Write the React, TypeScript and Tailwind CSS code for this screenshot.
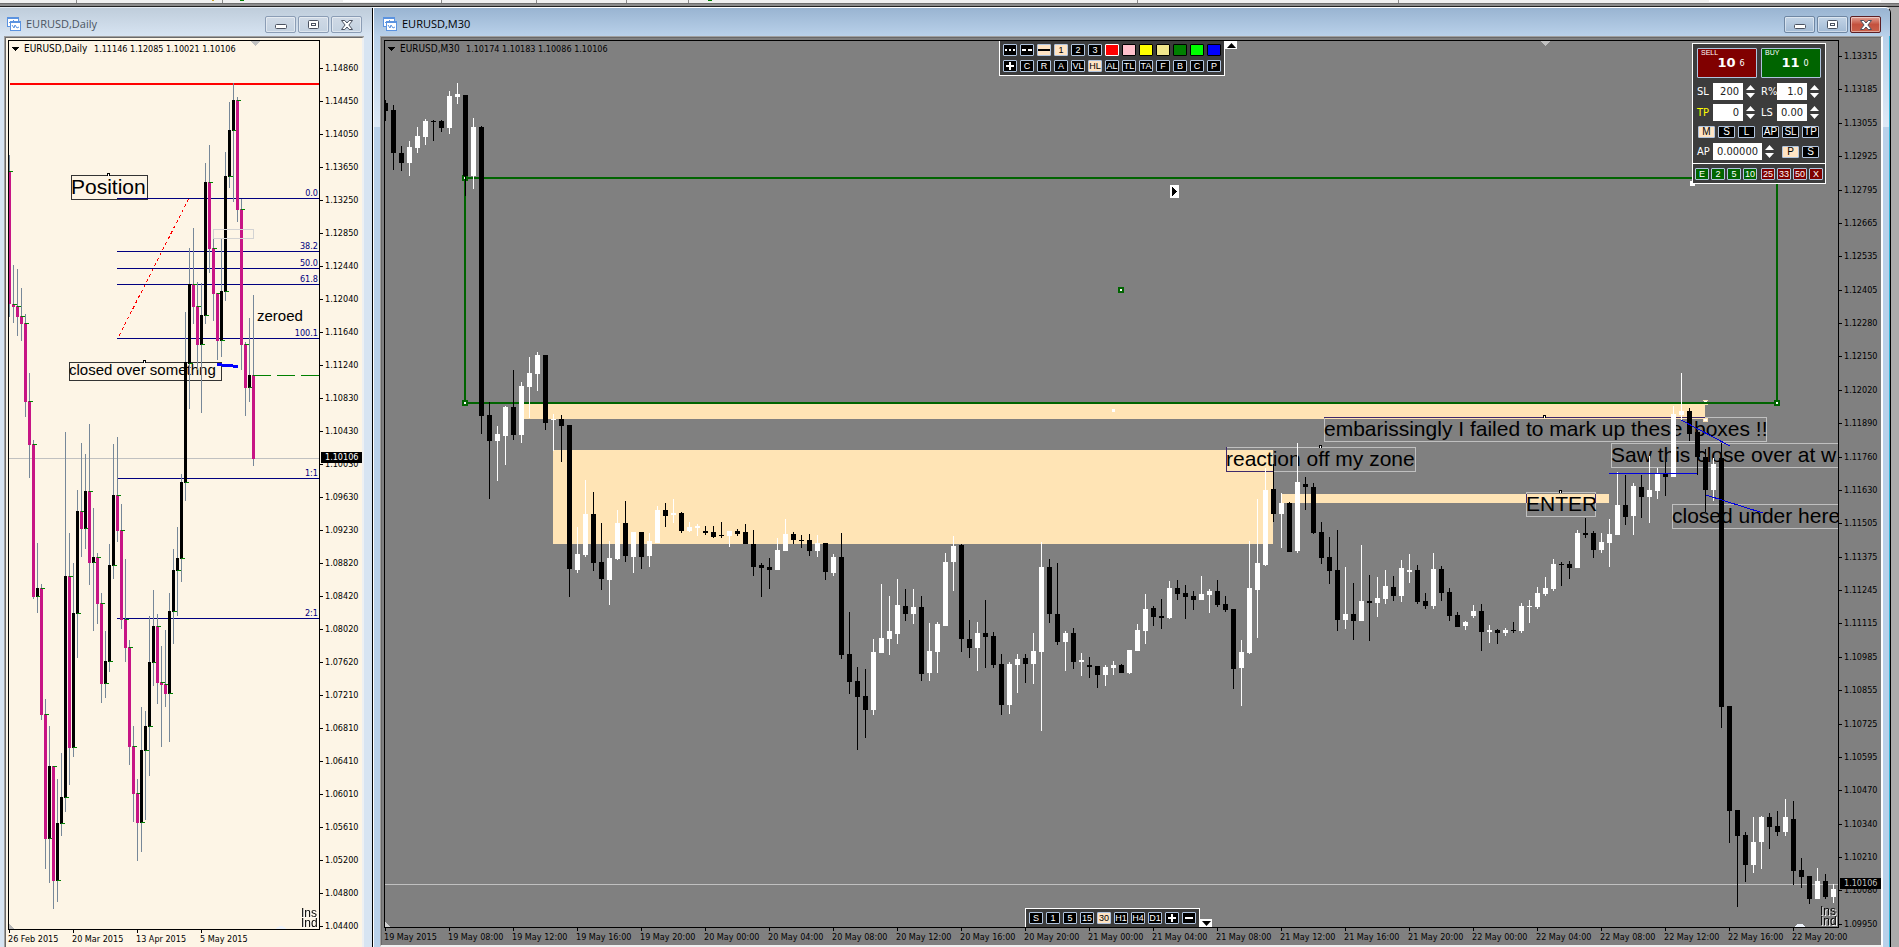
import type { ReactNode } from 'react';

// [high, body top, body bottom, low, rising]
type Candle = [number, number, number, number, 0 | 1];

const DAILY: Candle[] = [
  [155, 171, 304, 317, 0], [265, 304, 307, 323, 0], [269, 306, 317, 336, 0], [288, 316, 324, 341, 0],
  [314, 323, 402, 417, 0], [373, 401, 445, 478, 0], [440, 444, 597, 599, 0], [543, 588, 597, 613, 1],
  [584, 588, 715, 720, 0], [699, 714, 839, 869, 0], [726, 766, 839, 883, 1], [766, 766, 881, 909, 0],
  [779, 823, 881, 902, 1], [753, 797, 824, 836, 1], [432, 576, 798, 812, 1], [533, 576, 748, 785, 0],
  [563, 613, 748, 757, 1], [490, 511, 614, 658, 1], [443, 511, 529, 557, 0], [454, 491, 529, 549, 1],
  [424, 491, 563, 585, 0], [508, 557, 563, 631, 1], [553, 557, 604, 624, 0], [593, 603, 684, 703, 0],
  [631, 661, 684, 698, 1], [544, 565, 662, 672, 1], [444, 495, 566, 579, 1], [437, 495, 531, 542, 0],
  [504, 530, 620, 629, 0], [559, 619, 648, 662, 0], [640, 647, 747, 765, 0], [726, 746, 794, 822, 0],
  [779, 793, 823, 861, 0], [707, 750, 823, 852, 1], [711, 726, 751, 820, 1], [616, 662, 727, 776, 1],
  [590, 626, 663, 686, 1], [614, 626, 683, 704, 0], [646, 682, 685, 747, 0], [630, 684, 694, 707, 0],
  [593, 611, 694, 742, 1], [549, 570, 612, 644, 1], [527, 558, 571, 616, 1], [474, 482, 559, 582, 1],
  [312, 362, 483, 501, 1], [248, 284, 364, 409, 1], [228, 284, 307, 324, 0], [282, 306, 345, 370, 0],
  [283, 315, 345, 413, 1], [163, 182, 316, 324, 1], [145, 182, 249, 273, 0], [239, 248, 294, 321, 0],
  [293, 293, 341, 360, 0], [239, 291, 341, 357, 1], [152, 176, 292, 301, 1], [102, 130, 177, 188, 1],
  [83, 100, 131, 202, 1], [97, 100, 210, 222, 0], [199, 209, 345, 370, 0], [342, 344, 388, 416, 0],
  [318, 375, 388, 402, 1], [295, 375, 459, 466, 0],
];

const M30: Candle[] = [
  [100, 103, 111, 121, 0], [105, 110, 153, 170, 0], [146, 153, 163, 171, 0], [141, 147, 163, 176, 1],
  [127, 136, 148, 153, 1], [119, 121, 137, 145, 1], [120, 121, 122, 141, 0], [120, 121, 128, 132, 0],
  [91, 96, 128, 134, 1], [83, 94, 97, 104, 1], [95, 95, 176, 196, 0], [118, 127, 176, 189, 1],
  [126, 127, 416, 434, 0], [402, 415, 441, 499, 0], [426, 434, 441, 481, 1], [406, 407, 436, 465, 1],
  [370, 407, 435, 440, 0], [382, 386, 435, 443, 1], [357, 373, 387, 418, 1], [352, 355, 374, 391, 1],
  [355, 355, 423, 430, 0], [414, 419, 420, 451, 1], [415, 419, 426, 462, 0], [425, 425, 569, 597, 0],
  [527, 554, 570, 573, 1], [480, 514, 555, 557, 1], [492, 514, 563, 571, 0], [523, 562, 579, 590, 0],
  [541, 558, 580, 605, 1], [510, 523, 559, 560, 1], [501, 523, 556, 562, 0], [532, 532, 557, 573, 1],
  [532, 532, 557, 569, 0], [533, 541, 556, 567, 1], [506, 510, 543, 543, 1], [503, 510, 516, 527, 0],
  [499, 513, 515, 523, 1], [512, 513, 531, 533, 0], [522, 527, 531, 532, 1], [524, 526, 528, 536, 1],
  [526, 531, 533, 535, 0], [526, 532, 537, 538, 0], [522, 535, 536, 538, 0], [531, 531, 536, 547, 1],
  [529, 531, 534, 536, 0], [524, 532, 544, 544, 0], [530, 544, 567, 576, 0], [563, 565, 568, 597, 0],
  [558, 567, 570, 589, 0], [538, 550, 570, 570, 1], [519, 534, 551, 551, 1], [532, 534, 540, 544, 0],
  [535, 540, 541, 548, 0], [534, 540, 551, 556, 0], [535, 543, 551, 557, 1], [543, 543, 572, 580, 0],
  [554, 557, 573, 576, 1], [533, 557, 655, 659, 0], [612, 654, 682, 694, 0], [667, 681, 697, 750, 0],
  [669, 696, 710, 738, 0], [639, 652, 710, 715, 1], [584, 638, 653, 653, 1], [596, 631, 639, 655, 1],
  [579, 605, 634, 644, 1], [589, 606, 614, 621, 0], [589, 607, 614, 624, 1], [596, 607, 674, 681, 0],
  [623, 651, 673, 681, 1], [622, 624, 652, 673, 1], [553, 562, 626, 626, 1], [536, 546, 562, 591, 1],
  [544, 545, 639, 652, 0], [620, 639, 648, 658, 0], [622, 633, 648, 671, 1], [600, 633, 637, 668, 0],
  [632, 636, 665, 668, 0], [654, 664, 705, 715, 0], [662, 664, 705, 714, 1], [654, 659, 665, 693, 1],
  [654, 658, 664, 683, 0], [633, 651, 664, 684, 1], [542, 567, 652, 731, 1], [559, 567, 614, 623, 0],
  [563, 614, 642, 645, 0], [631, 633, 642, 671, 1], [628, 633, 662, 669, 0], [653, 660, 662, 676, 1],
  [657, 665, 667, 678, 0], [666, 666, 675, 688, 0], [665, 667, 675, 686, 1], [661, 665, 668, 675, 1],
  [664, 665, 673, 673, 0], [650, 650, 673, 674, 1], [624, 630, 651, 651, 1], [594, 609, 631, 644, 1],
  [606, 608, 617, 626, 0], [599, 616, 618, 629, 0], [581, 588, 618, 619, 1], [580, 588, 594, 600, 0],
  [585, 593, 597, 619, 0], [591, 596, 600, 610, 0], [576, 594, 600, 600, 1], [589, 591, 595, 613, 1],
  [580, 591, 605, 607, 0], [596, 604, 610, 612, 0], [609, 609, 669, 689, 0], [640, 652, 668, 706, 1],
  [541, 588, 653, 654, 1], [499, 563, 590, 638, 1], [468, 490, 565, 566, 1], [464, 489, 514, 522, 0],
  [493, 503, 514, 548, 1], [502, 503, 552, 552, 0], [443, 482, 551, 553, 1], [477, 484, 487, 510, 0],
  [483, 487, 533, 534, 0], [522, 532, 558, 564, 0], [537, 557, 571, 584, 0], [530, 570, 620, 631, 0],
  [567, 614, 620, 629, 1], [583, 614, 621, 640, 0], [545, 601, 621, 621, 1], [575, 601, 603, 641, 0],
  [577, 598, 603, 617, 1], [570, 586, 599, 604, 1], [576, 587, 596, 601, 0], [560, 568, 596, 602, 1],
  [554, 570, 572, 583, 1], [565, 570, 602, 604, 0], [593, 601, 606, 609, 0], [553, 569, 606, 609, 1],
  [566, 569, 593, 601, 0], [588, 592, 616, 621, 0], [612, 615, 627, 627, 0], [621, 622, 626, 630, 1],
  [605, 611, 616, 618, 1], [604, 611, 632, 651, 0], [625, 630, 632, 643, 1], [629, 630, 633, 644, 0],
  [628, 630, 633, 636, 1], [622, 630, 631, 633, 0], [603, 606, 631, 633, 1], [600, 606, 607, 623, 1],
  [587, 593, 607, 609, 1], [577, 588, 594, 596, 1], [559, 564, 589, 591, 1], [562, 564, 565, 586, 0],
  [561, 564, 568, 579, 0], [530, 533, 568, 568, 1], [518, 533, 535, 538, 0], [531, 533, 550, 558, 0],
  [533, 542, 550, 553, 1], [519, 534, 543, 567, 1], [472, 505, 535, 535, 1], [475, 505, 517, 525, 0],
  [483, 486, 516, 535, 1], [475, 487, 497, 518, 0], [456, 490, 497, 523, 1], [468, 474, 491, 499, 1],
  [462, 474, 477, 496, 0], [406, 414, 477, 477, 1], [373, 411, 415, 420, 1], [408, 411, 434, 441, 0],
  [430, 432, 457, 475, 0], [449, 457, 490, 512, 0], [458, 464, 490, 501, 1], [443, 458, 707, 728, 0],
  [706, 706, 811, 843, 0], [810, 810, 836, 907, 0], [832, 835, 865, 882, 0], [817, 842, 865, 873, 1],
  [816, 817, 842, 869, 1], [813, 817, 827, 849, 0], [811, 826, 832, 836, 0], [799, 817, 832, 836, 1],
  [801, 819, 871, 885, 0], [858, 870, 877, 888, 0], [876, 876, 899, 904, 0], [868, 881, 899, 899, 1],
  [874, 881, 897, 899, 0], [884, 889, 897, 903, 1],
];

const DAILY_PRICES = [
  '1.14860', '1.14450', '1.14050', '1.13650', '1.13250', '1.12850', '1.12440', '1.12040', '1.11640',
  '1.11240', '1.10830', '1.10430', '1.10030', '1.09630', '1.09230', '1.08820', '1.08420', '1.08020',
  '1.07620', '1.07210', '1.06810', '1.06410', '1.06010', '1.05610', '1.05200', '1.04800', '1.04400',
];

const M30_PRICES = [
  '1.13315', '1.13185', '1.13055', '1.12925', '1.12795', '1.12665', '1.12535', '1.12405', '1.12280',
  '1.12150', '1.12020', '1.11890', '1.11760', '1.11630', '1.11505', '1.11375', '1.11245', '1.11115',
  '1.10985', '1.10855', '1.10725', '1.10595', '1.10470', '1.10340', '1.10210', '1.10080', '1.09950',
];

const DAILY_DATES = ['26 Feb 2015', '20 Mar 2015', '13 Apr 2015', '5 May 2015'];

const M30_DATES = [
  '19 May 2015', '19 May 08:00', '19 May 12:00', '19 May 16:00', '19 May 20:00',
  '20 May 00:00', '20 May 04:00', '20 May 08:00', '20 May 12:00', '20 May 16:00', '20 May 20:00',
  '21 May 00:00', '21 May 04:00', '21 May 08:00', '21 May 12:00', '21 May 16:00', '21 May 20:00',
  '22 May 00:00', '22 May 04:00', '22 May 08:00', '22 May 12:00', '22 May 16:00', '22 May 20:00',
];

const FIB_LEVELS: [number, string][] = [
  [198, '0.0'], [251, '38.2'], [268, '50.0'], [284, '61.8'], [338, '100.1'], [478, '1:1'], [618, '2:1'],
];

const TAHOMA = "font-['DejaVu_Sans_Condensed','DejaVu_Sans',sans-serif]";
const ARIAL = "font-['Liberation_Sans',Arial,sans-serif]";

function WindowIcon() {
  return (
    <svg width="14" height="14" viewBox="0 0 14 14" shapeRendering="crispEdges" aria-hidden="true">
      <rect x="0.5" y="0.5" width="11" height="9" fill="#fff" stroke="#5b93e0" />
      <rect x="0" y="0" width="12" height="2" fill="#5b93e0" />
      <path d="M2 6l2-2 1 2 2-3" fill="none" stroke="#5b93e0" />
      <rect x="3.5" y="4.5" width="10" height="9" fill="#fff" stroke="#5b93e0" />
      <rect x="3" y="4" width="11" height="2" fill="#5b93e0" />
      <path d="M5 8l2 3 1-3 2 3 2-1" fill="none" stroke="#5b93e0" shapeRendering="auto" />
    </svg>
  );
}

function TitleBar({ title, active }: { title: string; active: boolean }) {
  const button = active
    ? 'border-[#6f87a3] from-[#c3d4e6] to-[#a3bbd5]'
    : 'border-[#8b9db5] from-[#d0dae6] to-[#c3d1e0]';
  const close = active ? 'border-[#5c1f24] from-[#e0a196] via-[#c4513e] to-[#c9604a]' : button;
  const base = 'flex h-[17px] w-[31px] items-center justify-center rounded-xs border bg-linear-to-b shadow-[inset_0_0_0_1px_rgba(255,255,255,0.45)]';
  return (
    <header
      className={`flex h-7 shrink-0 items-center ${
        active
          ? 'bg-linear-to-b from-[#99b4d1] to-[#b9d1ea] pr-[9px] pl-[9px]'
          : 'bg-linear-to-b from-[#bfcddb] to-[#d7e4f2] pr-[10px] pl-[7px]'
      }`}
    >
      <div className="mt-1 flex flex-1 items-center gap-[5px]">
        <WindowIcon />
        <h2 className={`font-['Open_Sans',sans-serif] text-[11px] leading-4 ${active ? 'text-black' : 'text-[#4a5561]'}`}>
          {title}
        </h2>
      </div>
      <div className="mt-[5px] flex gap-[2px]">
        <button type="button" aria-label="Minimize" className={`${base} ${button}`}>
          <svg width="12" height="5" viewBox="0 0 12 5" className="mt-1">
            <rect x="0.5" y="0.5" width="11" height="4" rx="1" fill="#fff" stroke="#4b5260" />
          </svg>
        </button>
        <button type="button" aria-label="Restore" className={`${base} ${button}`}>
          <svg width="11" height="9" viewBox="0 0 11 9">
            <rect x="0.5" y="0.5" width="10" height="8" rx="1" fill="#fff" stroke="#4b5260" />
            <rect x="3.5" y="3.5" width="4" height="2" fill="#fff" stroke="#4b5260" />
          </svg>
        </button>
        <button type="button" aria-label="Close" className={`${base} ${close}`}>
          <svg width="12" height="10" viewBox="0 0 12 10">
            <path
              d="M0.5 0.5h3.3L6 3l2.2-2.5h3.3L7.9 5l3.6 4.5H8.2L6 7 3.8 9.5H0.5L4.1 5z"
              fill="#fff"
              stroke="#4b5260"
            />
          </svg>
        </button>
      </div>
    </header>
  );
}

function PriceAxis({ prices, className }: { prices: string[]; className: string }) {
  return (
    <ul className={`flex w-[42px] shrink-0 flex-col justify-between ${className}`}>
      {prices.map((price) => (
        <li key={price} className="flex h-[11px] items-center gap-[2px] leading-[11px]">
          <span className="h-px w-[3px] bg-black" />
          {price}
        </li>
      ))}
    </ul>
  );
}

function DateAxis({ dates }: { dates: string[] }) {
  return (
    <ul className="flex h-[17px] w-0 shrink-0">
      {dates.map((date) => (
        <li key={date} className="w-16 shrink-0 leading-3 whitespace-nowrap">
          <span className="ml-px block h-[3px] w-px bg-black" />
          {date}
        </li>
      ))}
    </ul>
  );
}

function Handle({ x, y, color = '#000' }: { x: number; y: number; color?: string }) {
  return (
    <>
      <rect x={x - 3} y={y - 3} width="6" height="6" fill={color} />
      <rect x={x - 1} y={y - 1} width="2" height="2" fill="#fff" />
    </>
  );
}

function Pin({ x, y }: { x: number; y: number }) {
  return (
    <>
      <rect x={x} y={y} width="3" height="3" fill="#000" />
      <rect x={x + 1} y={y + 1} width="1" height="2" fill="#fff" />
    </>
  );
}

type NoteProps = { x: number; y: number; width: number; height?: number; stroke: string; size?: string; children: string };

function Note({ x, y, width, height = 24, stroke, size = 'text-[21px]', children }: NoteProps) {
  return (
    <>
      <rect x={x + 0.5} y={y + 0.5} width={width} height={height} fill="none" stroke={stroke} />
      <text x={x} y={y + height - 5} className={`${ARIAL} ${size}`}>
        {children}
      </text>
    </>
  );
}

function CornerLabel({ x, y }: { x: number; y: number }) {
  return (
    <g className={`${ARIAL} text-[12px] drop-shadow-[1px_1px_0_#fff]`}>
      <text x={x} y={y}>Ins</text>
      <text x={x} y={y + 10}>Ind</text>
    </g>
  );
}

function DailyChart() {
  return (
    <svg className="absolute inset-0 h-full w-full" shapeRendering="crispEdges" role="img" aria-label="EURUSD daily chart">
      <g transform="translate(-9 -41)">
        <path d="M12 47h7l-3.500 4z" />
        <text x="24" y="52" className="text-[10px]">EURUSD,Daily</text>
        <text x="94" y="52">1.11146 1.12085 1.10021 1.10106</text>
        <path d="M251 41h9l-4.500 5z" fill="#c0c0c0" />
        <path d="M9 924v5h5z" fill="#b8b8b8" />
        <path d="M275 929q6-6 12 0z" fill="#eef3fb" />
        <rect x="9" y="458" width="310" height="1" fill="#c0c0c0" />
        <rect x="10" y="83" width="309" height="2" fill="#f00" />
        <Note x={71} y={175} width={76} stroke="#333">Position</Note>
        <Pin x={107} y={173} />
        <Note x={69} y={362} width={152} height={18} stroke="#333" size="text-[15px]">closed over somethng</Note>
        <Pin x={143} y={360} />
        <text x="257" y="321" className={`${ARIAL} text-[15px]`}>zeroed</text>
        {FIB_LEVELS.map(([y, label]) => (
          <g key={label} fill="#000080">
            <rect x="117" y={y} width="202" height="1" />
            <text x="318" y={y - 2} textAnchor="end">{label}</text>
          </g>
        ))}
        <path d="M188.500 199L118 338" stroke="#f00" strokeDasharray="3 3" />
        {DAILY.map(([high, top, bottom, low, rising], i) => {
          const x = 9 + i * 4;
          return (
            <g key={i}>
              <rect x={x} y={high} width="1" height={low - high} fill="#778899" />
              <rect x={x - 1} y={top} width="3" height={bottom - top} fill={rising ? '#000' : '#c71585'} />
              <rect x={x} y={rising ? bottom - 1 : top} width="4" height="1" fill="#008000" />
            </g>
          );
        })}
        <rect x="213.500" y="229.500" width="40" height="9" fill="none" stroke="#d3d3d3" />
        <path d="M217 364.500L238 366.500" stroke="#00f" strokeWidth="3" />
        <path d="M253 375.500H319" stroke="#008000" strokeDasharray="18 6" />
        <CornerLabel x={301} y={917} />
      </g>
    </svg>
  );
}

function M30Chart() {
  return (
    <svg className="absolute inset-0 h-full w-full" shapeRendering="crispEdges" role="img" aria-label="EURUSD 30 minute chart">
      <g transform="translate(-385 -41)">
        <path d="M388 47h7l-3.500 4z" />
        <text x="400" y="52" className="text-[10px]">EURUSD,M30</text>
        <text x="466" y="52">1.10174 1.10183 1.10086 1.10106</text>
        <path d="M1541 41h9l-4.500 5z" fill="#c0c0c0" />
        <path d="M385 922v5h5z" fill="#d0d0d0" />
        <path d="M1794 927q6-7 12 0z" fill="#eef3fb" />
        <rect x="385" y="884" width="1453" height="1" fill="#c0c0c0" />
        <g fill="#ffe4b5">
          <rect x="524" y="404" width="1181" height="15" />
          <rect x="553" y="450" width="720" height="94" />
          <rect x="1282" y="494" width="327" height="9" />
        </g>
        <rect x="465" y="178" width="1312" height="225" fill="none" stroke="#006400" strokeWidth="2" />
        <Handle x={465} y={178} color="#006400" />
        <Handle x={465} y={403} color="#006400" />
        <Handle x={1777} y={403} color="#006400" />
        <Handle x={1121} y={290} color="#006400" />
        <path d="M1703 400h5v1h-5zM1703 404h5v1h-5zM1703 418h5v4h-5z" fill="#ffe4b5" />
        <path d="M1704 401h3v1h-3zM1704 419h3v2h-3z" fill="#fff" />
        <rect x="1112" y="409" width="3" height="3" fill="#fff" />
        <Note x={1226} y={447} width={189} stroke="#c0c0c0">reaction off my zone</Note>
        <path d="M1226.500 447V471.500H1273" fill="none" stroke="#3f2a6b" />
        <Pin x={1319} y={445} />
        <Note x={1324} y={417} width={442} stroke="#c0c0c0">{'embarissingly I failed to mark up these \u00a0boxes !!'}</Note>
        <path d="M1324 417.500H1705" stroke="#3f2a6b" />
        <Pin x={1543} y={415} />
        <Note x={1611} y={443} width={260} stroke="#c0c0c0">Saw this close over at w</Note>
        <Note x={1672} y={504} width={200} stroke="#c0c0c0">closed under here</Note>
        <Note x={1526} y={492} width={69} stroke="#c0c0c0">ENTER</Note>
        <path d="M1526.500 494v9M1595.500 494v9" stroke="#3f2a6b" />
        <Pin x={1559} y={490} />
        {M30.map(([high, top, bottom, low, rising], i) => {
          const x = 385 + i * 8;
          return (
            <g key={i} fill={rising ? '#fff' : '#000'}>
              <rect x={x} y={high} width="1" height={low - high} />
              <rect x={x - 2} y={top} width="5" height={bottom - top} />
            </g>
          );
        })}
        <path d="M1609 473.500H1697M1681 420L1730 446M1706 495L1763 513" stroke="#0000e0" />
        <rect x="1170" y="185" width="9" height="13" fill="#fff" />
        <path d="M1172 187v9l5-4.500z" />
        <rect x="1690" y="181" width="5" height="5" fill="#fff" />
        <CornerLabel x={1820} y={915} />
      </g>
    </svg>
  );
}

function ToolButton({ label, tone = 'bg-black text-white', children }: { label: string; tone?: string; children?: ReactNode }) {
  return (
    <button
      type="button"
      aria-label={label}
      className={`flex h-3 w-[14px] items-center justify-center rounded-[1px] border border-[#b0c4de] ${ARIAL} text-[9px] leading-none ${tone}`}
    >
      {children}
    </button>
  );
}

const BISQUE = 'bg-[#ffe4c4] text-black';

const PALETTE = [
  { name: 'Red', tone: 'bg-[#ff0000] border-white' },
  { name: 'Pink', tone: 'bg-[#ffc0cb] border-black' },
  { name: 'Yellow', tone: 'bg-[#ffff00] border-black' },
  { name: 'Khaki', tone: 'bg-[#f0e68c] border-black' },
  { name: 'Green', tone: 'bg-[#008000] border-black' },
  { name: 'Lime', tone: 'bg-[#00ff00] border-black' },
  { name: 'Blue', tone: 'bg-[#0000ff] border-black' },
];

function Glyph({ d }: { d: string }) {
  return (
    <svg width="12" height="10" viewBox="0 0 12 10" shapeRendering="crispEdges" aria-hidden="true" className="shrink-0">
      <path d={d} fill="currentColor" />
    </svg>
  );
}

const PLUS = 'M5 1h2v3h3v2H7v3H5V6H2V4h3z';

function DrawingToolbar() {
  return (
    <div className="absolute top-0 left-[614px] flex items-start">
      <div className="grid grid-cols-13 gap-x-[3px] gap-y-1 border border-t-0 border-white bg-[#3c3c3c] p-[3px]">
        <ToolButton label="Dotted"><Glyph d="M1 4h2v2H1zM5 4h2v2H5zM9 4h2v2H9z" /></ToolButton>
        <ToolButton label="Dashed"><Glyph d="M1 4h4v2H1zM7 4h4v2H7z" /></ToolButton>
        <ToolButton label="Solid" tone={BISQUE}><Glyph d="M0 4h12v2H0z" /></ToolButton>
        <ToolButton label="Width 1" tone={BISQUE}>1</ToolButton>
        <ToolButton label="Width 2">2</ToolButton>
        <ToolButton label="Width 3">3</ToolButton>
        {PALETTE.map((color) => (
          <button key={color.name} type="button" aria-label={color.name} className={`h-3 w-[14px] rounded-[1px] border ${color.tone}`} />
        ))}
        <ToolButton label="Crosshair"><Glyph d={PLUS} /></ToolButton>
        {['C', 'R', 'A', 'VL', 'HL', 'AL', 'TL', 'TA', 'F', 'B', 'C', 'P'].map((tool, i) => (
          <ToolButton key={i} label={tool} tone={tool === 'HL' ? BISQUE : undefined}>{tool}</ToolButton>
        ))}
      </div>
      <button type="button" aria-label="Collapse drawing tools" className="flex h-2 w-3 items-center justify-center bg-white">
        <svg width="9" height="5" viewBox="0 0 9 5"><path d="M4.500 0L9 5H0z" /></svg>
      </button>
    </div>
  );
}

function TimeframeBar() {
  return (
    <div className="absolute bottom-0 left-[640px] flex items-end">
      <div className="flex gap-[3px] border border-b-0 border-white bg-[#3c3c3c] p-[3px]">
        {['S', '1', '5', '15', '30', 'H1', 'H4', 'D1'].map((frame) => (
          <ToolButton key={frame} label={frame} tone={frame === '30' ? BISQUE : undefined}>{frame}</ToolButton>
        ))}
        <ToolButton label="Zoom in"><Glyph d={PLUS} /></ToolButton>
        <ToolButton label="Zoom out"><Glyph d="M2 4h8v2H2z" /></ToolButton>
      </div>
      <button type="button" aria-label="Collapse timeframes" className="flex h-2 w-3 items-center justify-center bg-white">
        <svg width="9" height="5" viewBox="0 0 9 5"><path d="M0 0h9L4.500 5z" /></svg>
      </button>
    </div>
  );
}

function Field({ label, value, wide, yellow }: { label: string; value: string; wide?: boolean; yellow?: boolean }) {
  return (
    <div className="flex h-[17px] items-center">
      <label className="flex items-center">
        <span className={`w-4 text-[11px] leading-4 ${yellow ? 'text-[#ffff00]' : 'text-white'}`}>{label}</span>
        <input
          type="text"
          defaultValue={value}
          className={`h-[17px] bg-white pr-1 text-right text-[11px] leading-4 text-[#222] ${wide ? 'w-[49px]' : 'w-[30px]'}`}
        />
      </label>
      <div className="ml-[3px] flex flex-col gap-[3px]">
        <button type="button" aria-label={`Increase ${label}`} className="h-[5px] w-[9px]">
          <svg width="9" height="5" viewBox="0 0 9 5" className="block"><path d="M4.500 0L9 5H0z" fill="#fff" /></svg>
        </button>
        <button type="button" aria-label={`Decrease ${label}`} className="h-[5px] w-[9px]">
          <svg width="9" height="5" viewBox="0 0 9 5" className="block"><path d="M0 0h9L4.500 5z" fill="#fff" /></svg>
        </button>
      </div>
    </div>
  );
}

function ModeButton({ children, selected }: { children: string; selected?: boolean }) {
  return (
    <button
      type="button"
      className={`flex h-3 w-[17px] items-center justify-center rounded-[1px] border border-[#b0c4de] ${ARIAL} text-[10px] leading-none ${
        selected ? BISQUE : 'bg-black text-white'
      }`}
    >
      {children}
    </button>
  );
}

function QuoteButton({ side, big, small, tone }: { side: string; big: string; small: string; tone: string }) {
  return (
    <button type="button" className={`relative mb-px flex h-[30px] w-[60px] items-center justify-center gap-1 rounded-[1px] border border-[#b0c4de] pl-2 text-white ${tone}`}>
      <span className={`absolute top-0 left-[3px] ${ARIAL} text-[7px] leading-2`}>{side}</span>
      <span className="font-['DejaVu_Sans',sans-serif] text-[13px] leading-4 font-bold">{big}</span>
      <span className="text-[9px] leading-4">{small}</span>
    </button>
  );
}

function CloseRow({ items, tone }: { items: string[]; tone: string }) {
  return (
    <div className="flex gap-[2px]">
      {items.map((item) => (
        <ToolButton key={item} label={item} tone={tone}>{item}</ToolButton>
      ))}
    </div>
  );
}

function TradePanel() {
  return (
    <div className="absolute top-[2px] right-3 w-[134px] border border-white bg-[#3c3c3c]">
      <div className="grid grid-cols-2 gap-1 px-1 pt-1 pb-[3px]">
        <QuoteButton side="SELL" big="10" small="6" tone="bg-[#800000]" />
        <QuoteButton side="BUY" big="11" small="0" tone="bg-[#006400]" />
        <Field label="SL" value="200" />
        <Field label="R%" value="1.0" />
        <Field label="TP" value="0" yellow />
        <Field label="LS" value="0.00" />
        <div className="flex gap-[3px] py-px pl-px">
          <ModeButton selected>M</ModeButton>
          <ModeButton>S</ModeButton>
          <ModeButton>L</ModeButton>
        </div>
        <div className="flex gap-[3px] py-px pl-px">
          <ModeButton>AP</ModeButton>
          <ModeButton>SL</ModeButton>
          <ModeButton>TP</ModeButton>
        </div>
        <div className="col-span-2 flex items-center justify-between pr-[2px]">
          <Field label="AP" value="0.00000" wide />
          <div className="flex gap-[3px]">
            <ModeButton selected>P</ModeButton>
            <ModeButton>S</ModeButton>
          </div>
        </div>
      </div>
      <div className="flex justify-between border-t border-white px-[2px] pt-1 pb-[3px]">
        <CloseRow items={['E', '2', '5', '10']} tone="bg-[#006400] text-white" />
        <CloseRow items={['25', '33', '50', 'X']} tone="bg-[#800000] text-white" />
      </div>
    </div>
  );
}

function DailyWindow() {
  return (
    <section className="flex w-[373px] shrink-0 flex-col border-r border-black bg-[#d7e4f2]">
      <TitleBar title="EURUSD,Daily" active={false} />
      <div className="mr-2 ml-1 flex min-h-0 flex-1 border-t border-l border-[#a0a0a0]">
        <div className="flex min-w-0 flex-1 border-t border-r-2 border-l border-t-[#696969] border-r-[#eef0f2] border-l-[#696969] bg-[#fdf5e6] pt-[2px] pl-[2px]">
          <div className="flex min-w-0 flex-1 flex-col">
            <div className="relative flex-1 overflow-hidden border border-black">
              <DailyChart />
            </div>
            <DateAxis dates={DAILY_DATES} />
          </div>
          <div className="relative flex">
            <PriceAxis prices={DAILY_PRICES} className="pt-[23px] pb-[15px]" />
            <span className="absolute top-[412px] right-0 w-[41px] bg-black pl-1 leading-[11px] text-white">1.10106</span>
          </div>
        </div>
      </div>
    </section>
  );
}

function M30Window() {
  return (
    <section className="flex min-w-0 flex-1 flex-col overflow-hidden rounded-tr-md border-t border-r border-l border-t-white border-r-black border-l-white bg-[#b9d1ea]">
      <TitleBar title="EURUSD,M30" active />
      <div className="flex min-h-0 flex-1 border-r border-[#35b5d5] bg-[linear-gradient(#b9d1ea,#dde9f6_91px,#b9d1ea_91px)] pr-[6px] pl-[6px]">
        <div className="flex min-w-0 flex-1 border-t border-r-2 border-b-2 border-l border-t-[#a0a0a0] border-r-white border-b-[#f0f0f0] border-l-[#a0a0a0]">
          <div className="flex min-w-0 flex-1 border-t border-l border-[#696969] bg-[#808080] pt-[2px] pl-[2px]">
            <div className="flex min-w-0 flex-1 flex-col">
              <div className="relative flex-1 overflow-hidden border border-black">
                <M30Chart />
                <DrawingToolbar />
                <TimeframeBar />
                <TradePanel />
              </div>
              <DateAxis dates={M30_DATES} />
            </div>
            <div className="relative flex">
              <PriceAxis prices={M30_PRICES} className="pt-[11px] pb-[15px]" />
              <span className="absolute top-[838px] right-0 w-[41px] bg-black pl-1 leading-[11px] text-[#c0c0c0]">1.10106</span>
            </div>
          </div>
        </div>
      </div>
    </section>
  );
}

export default function App() {
  return (
    <main className={`flex h-screen flex-col overflow-hidden bg-[#ababab] ${TAHOMA} text-[9px] text-black`}>
      <div className="h-[3px] shrink-0 bg-[#f0f0f0]">
        <svg className="block h-[3px] w-full" shapeRendering="crispEdges" aria-hidden="true">
          {[76, 222, 441, 536, 626, 688, 1137, 1398].map((x) => (
            <rect key={x} x={x} y="0" width="1" height="3" fill="#8a8a8a" />
          ))}
          <path d="M240 0h4v1h-4zM708 0h4v1h-4z" fill="#008000" />
          <path d="M212 0h2v1h-2z" fill="#c9a227" />
          <path d="M343 0h98v2h-98zM1709 0h172v2h-172z" fill="#fff" />
        </svg>
      </div>
      <div className="h-1 shrink-0 border-t border-b border-t-[#6e6e6e] border-b-[#222] bg-[#8c8c8c]" />
      <div className="flex min-h-0 flex-1 pr-2">
        <div className="flex border-t border-[#e4ebf2]">
          <DailyWindow />
        </div>
        <M30Window />
      </div>
    </main>
  );
}
